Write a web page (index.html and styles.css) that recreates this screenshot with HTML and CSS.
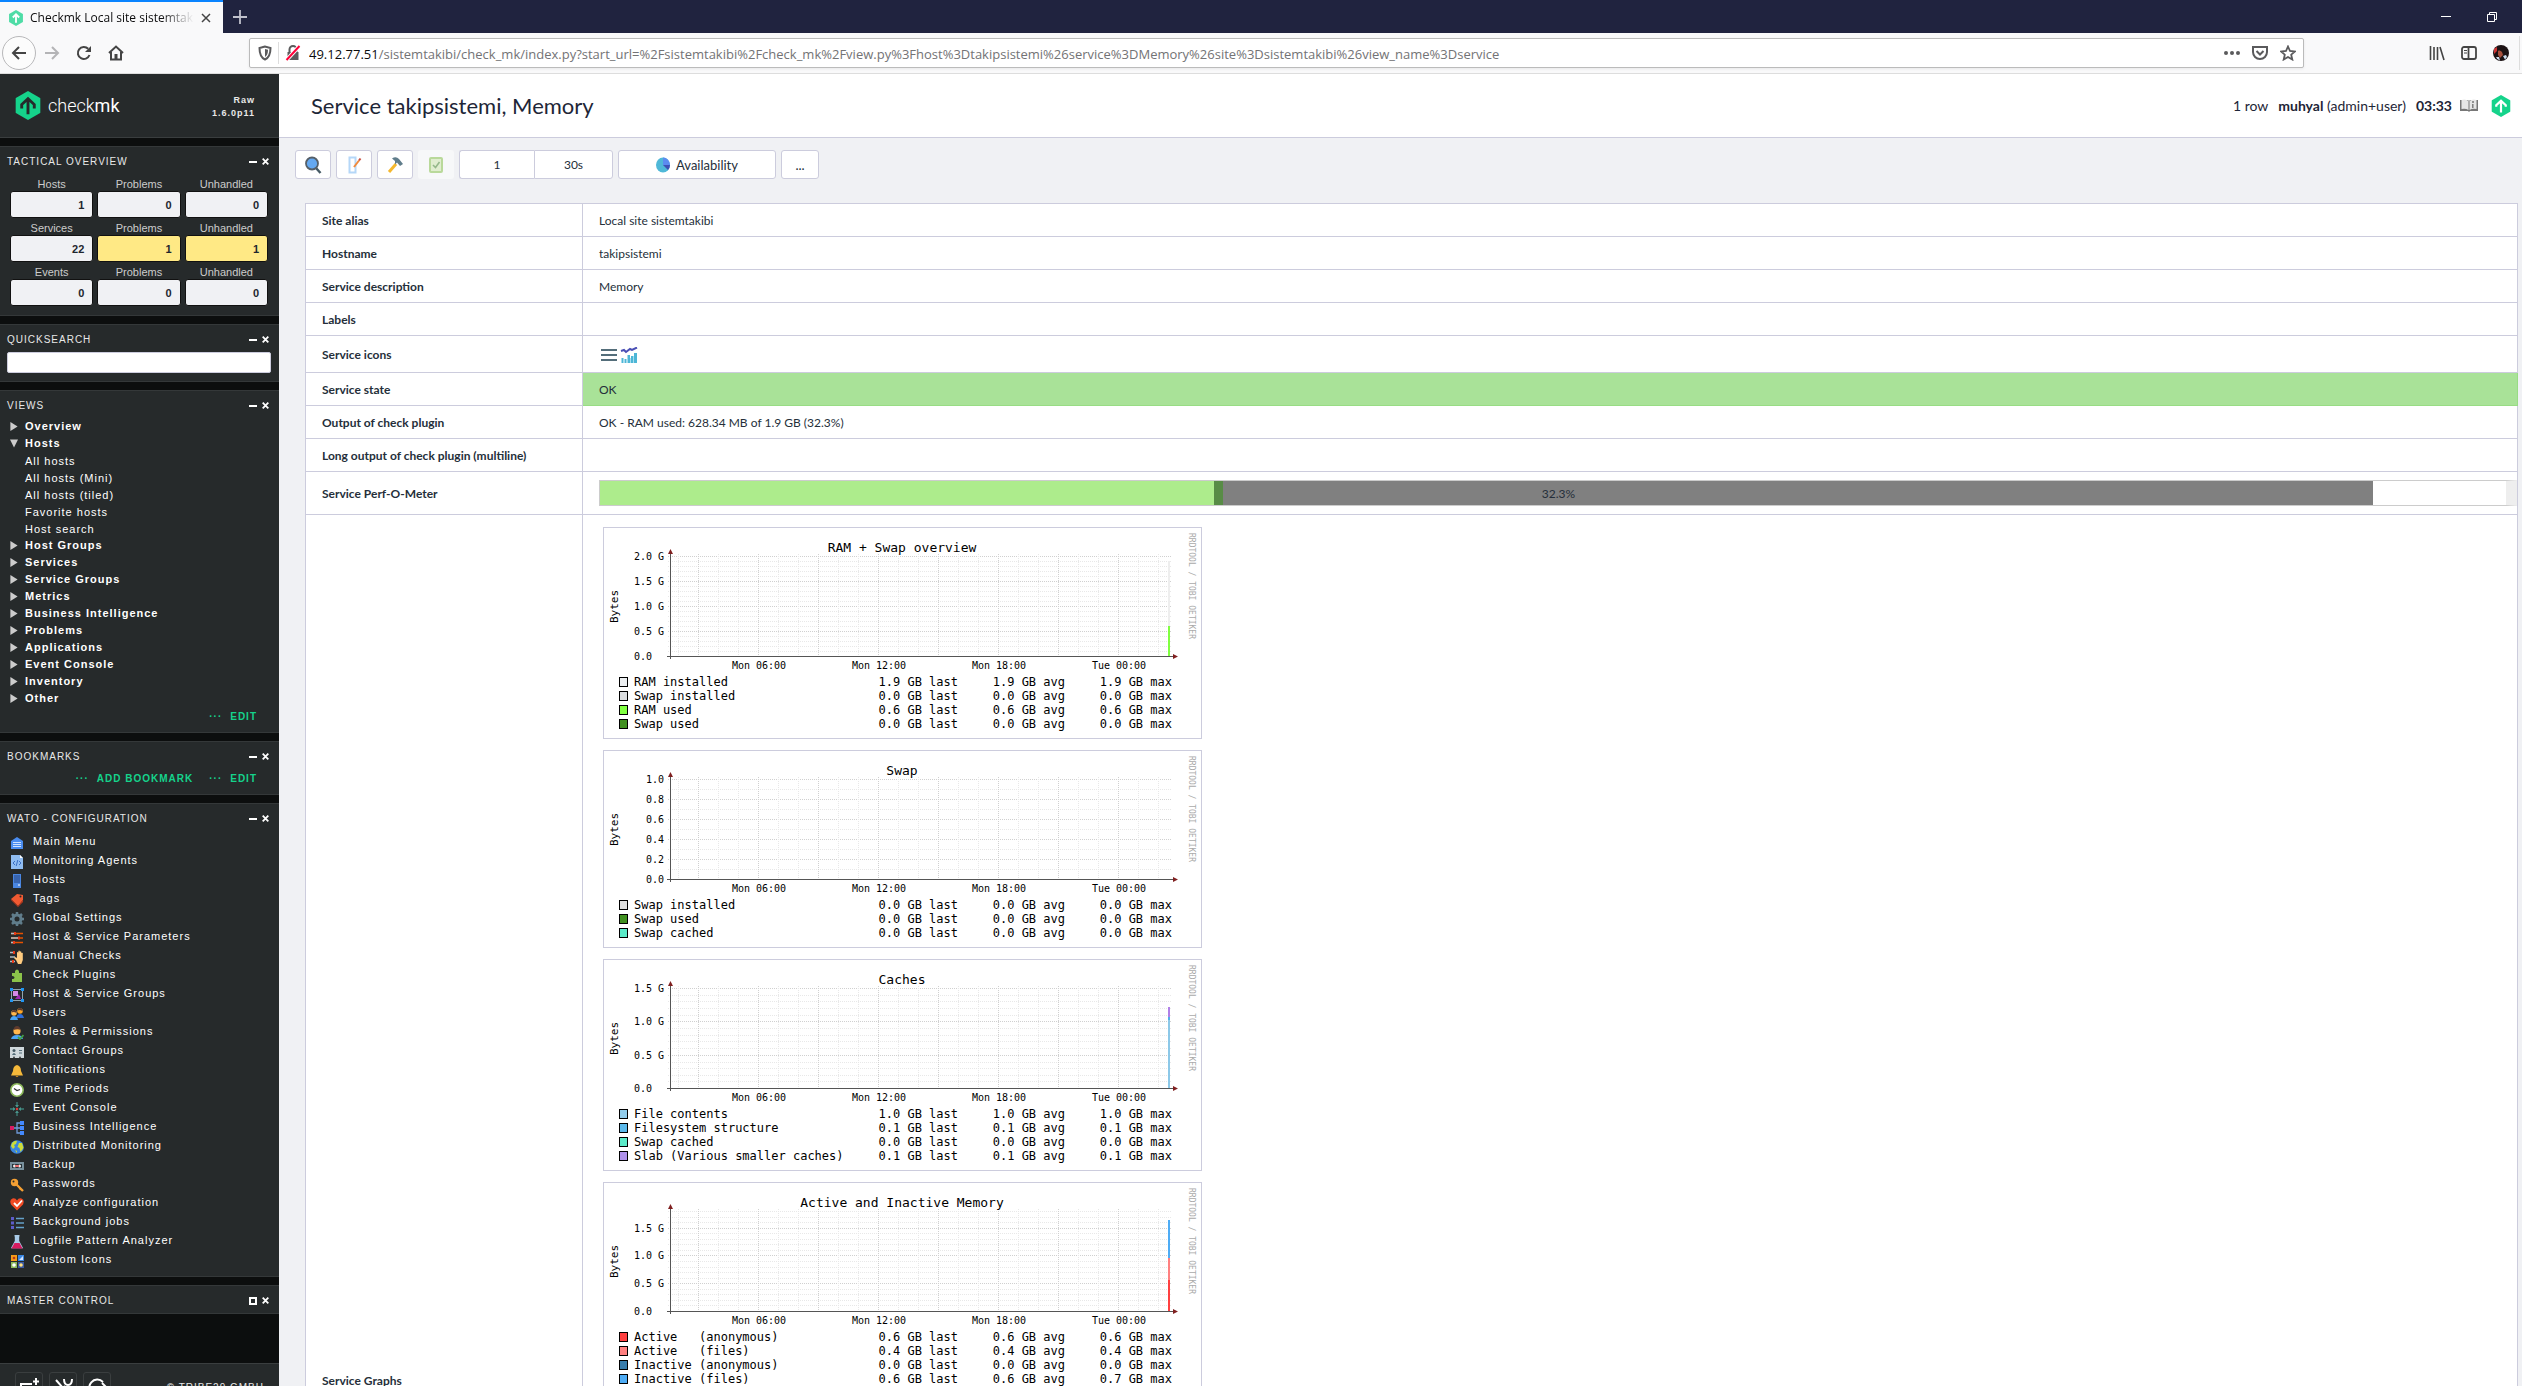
FILE: index.html
```html
<!DOCTYPE html>
<html lang="en">
<head>
<meta charset="utf-8">
<title>Checkmk Local site sistemtakibi</title>
<link rel="stylesheet" href="styles.css">
</head>
<body>
<svg class="defs" aria-hidden="true">
  <defs>
    <symbol id="logo" viewBox="0 0 26 30"><path fill="#15d38b" d="M13 0l13 7.500v15L13 30 0 22.500v-15z"/></symbol>
    <symbol id="minus" viewBox="0 0 8 8"><path d="M0 4h8" stroke="#fff" stroke-width="2"/></symbol>
    <symbol id="cross" viewBox="0 0 8 8"><path d="M1.500 1.500l5 5M6.500 1.500l-5 5" stroke="#fff" stroke-width="1.600"/></symbol>
    <symbol id="square" viewBox="0 0 8 8"><path d="M1 1h6v6H1z" fill="none" stroke="#fff" stroke-width="2"/></symbol>
    <symbol id="closed" viewBox="0 0 8 10"><path d="M0 0l8 5-8 5z" fill="#ccc"/></symbol>
    <symbol id="open" viewBox="0 0 8 8"><path d="M0 0h8L4 8z" fill="#ccc"/></symbol>
    <symbol id="axes" viewBox="0 0 597 147">
      <path class="grid-minor" d="M74.500 26v104M114.500 26v104M134.500 26v104M174.500 26v104M194.500 26v104M234.500 26v104M254.500 26v104M294.500 26v104M314.500 26v104M354.500 26v104M374.500 26v104M414.500 26v104M434.500 26v104M474.500 26v104M494.500 26v104M534.500 26v104M554.500 26v104"/>
      <path class="grid-major" d="M94.500 26v104M154.500 26v104M214.500 26v104M274.500 26v104M334.500 26v104M394.500 26v104M454.500 26v104M514.500 26v104"/>
      <path d="M66.500 24v107M63 128.500h507" stroke="#555" fill="none"/>
      <path d="M64 26l2.500-5 2.500 5zM569 126l5 2.500-5 2.500z" fill="#802020"/>
      <g class="tick" text-anchor="middle"><text x="155" y="141">Mon 06:00</text><text x="275" y="141">Mon 12:00</text><text x="395" y="141">Mon 18:00</text><text x="515" y="141">Tue 00:00</text></g>
      <text class="unit" transform="translate(14 95) rotate(-90)">Bytes</text>
      <text class="watermark" transform="translate(585 5) rotate(90)">RRDTOOL / TOBI OETIKER</text>
    </symbol>
  </defs>
</svg>

<header class="browser">
  <div class="tabs">
    <div class="tab">
      <svg class="favicon" viewBox="0 0 26 30"><use href="#logo" opacity=".75"/><path d="M13 24V9M7 14l6-6 6 6" fill="none" stroke="#fff" stroke-width="3.500"/></svg>
      <span class="tab-title">Checkmk Local site sistemtakibi</span>
      <button class="plain" aria-label="Close tab"><svg width="10" height="10" viewBox="0 0 10 10"><path d="M1 1l8 8M9 1L1 9" stroke="#444" stroke-width="1.500"/></svg></button>
    </div>
    <button class="plain new-tab" aria-label="New tab"><svg width="14" height="14" viewBox="0 0 14 14"><path d="M7 0v14M0 7h14" stroke="#c0c1cc" stroke-width="1.800"/></svg></button>
    <div class="window-buttons">
      <button class="plain" aria-label="Minimize"><svg width="10" height="10" viewBox="0 0 10 10"><path d="M0 4.500h10" stroke="#fff"/></svg></button>
      <button class="plain" aria-label="Restore"><svg width="10" height="10" viewBox="0 0 10 10" fill="none" stroke="#fff"><path d="M.5 2.500h7v7h-7zM2.500 2V.5h7v7H8"/></svg></button>
    </div>
  </div>
  <div class="navbar">
    <button class="plain back" aria-label="Back"><svg width="16" height="16" viewBox="0 0 16 16"><path d="M15 8H2M8 2L2 8l6 6" fill="none" stroke="#444" stroke-width="2"/></svg></button>
    <button class="plain" aria-label="Forward"><svg width="16" height="16" viewBox="0 0 16 16"><path d="M1 8h13M8 2l6 6-6 6" fill="none" stroke="#b4b4b6" stroke-width="2"/></svg></button>
    <button class="plain" aria-label="Reload"><svg width="16" height="16" viewBox="0 0 16 16"><path d="M13.500 10a6 6 0 1 1-1.300-6.200" fill="none" stroke="#444" stroke-width="2"/><path d="M15 1v6H9z" fill="#444"/></svg></button>
    <button class="plain" aria-label="Home"><svg width="16" height="16" viewBox="0 0 16 16" fill="none" stroke="#444" stroke-width="2"><path d="M1 8l7-6.500L15 8M3 7v7.500h10V7"/><path d="M8 14V9" stroke-width="3"/></svg></button>
    <div class="url">
      <svg width="16" height="16" viewBox="0 0 16 16"><path d="M8 1.500L2.500 3c0 6 1 9.500 5.500 11.500 4.500-2 5.500-5.500 5.500-11.500z" fill="none" stroke="#5a5a5c" stroke-width="2"/><path d="M8 4v8c2-1.500 3-3.500 3-7.200z" fill="#5a5a5c"/></svg>
      <span class="url-rule"></span>
      <svg width="16" height="16" viewBox="0 0 16 16"><path d="M4.500 7V4.500a3.500 3.500 0 0 1 7 0V7" fill="none" stroke="#5a5a5c" stroke-width="2"/><path d="M2.500 7h11v8h-11z" fill="#5a5a5c"/><path d="M1.500 15L14.500 1" stroke="#fff" stroke-width="4"/><path d="M1.500 15L14.500 1" stroke="#ff0039" stroke-width="2"/></svg>
      <span class="address"><b>49.12.77.51</b>/sistemtakibi/check_mk/index.py?start_url=%2Fsistemtakibi%2Fcheck_mk%2Fview.py%3Fhost%3Dtakipsistemi%26service%3DMemory%26site%3Dsistemtakibi%26view_name%3Dservice</span>
      <svg width="16" height="16" viewBox="0 0 16 16" fill="#5a5a5c"><circle cx="2" cy="8" r="2"/><circle cx="8" cy="8" r="2"/><circle cx="14" cy="8" r="2"/></svg>
      <svg width="16" height="16" viewBox="0 0 16 16" fill="none" stroke="#5a5a5c" stroke-width="2"><path d="M1 2h14v5a7 7 0 0 1-14 0z"/><path d="M4.500 6L8 9.500 11.500 6"/></svg>
      <svg width="16" height="16" viewBox="0 0 16 16" fill="none" stroke="#5a5a5c" stroke-width="1.800"><path d="M8 1.500l2 4.500 4.800.5-3.600 3.200 1.100 4.800L8 12l-4.300 2.500 1.100-4.800L1.200 6.500 6 6z"/></svg>
    </div>
    <div class="nav-right">
      <svg width="16" height="16" viewBox="0 0 16 16" stroke="#444" stroke-width="1.600"><path d="M1.500 1v14M5 2v13M8.500 2v13M11 2l4 13"/></svg>
      <svg width="16" height="16" viewBox="0 0 16 16" fill="none" stroke="#444" stroke-width="1.800"><rect x="1" y="2" width="14" height="12" rx="2"/><path d="M7.500 2v12"/><path d="M3 5.500h3M3 8h3" stroke-width="1"/></svg>
      <svg width="16" height="16" viewBox="0 0 16 16"><circle cx="8" cy="8" r="8" fill="#1c1214"/><path d="M5 6c1-1 3 0 4 1l1 3-3 3-2-3z" fill="#a8503c"/><path d="M3 12l3 0 1 3.500q-3-.5-4-3.500zM10 11l3-1 1 2-2 2.500z" fill="#cde"/><path d="M1 4l3-2v4L1 9z" fill="#c33"/></svg>
    </div>
  </div>
</header>

<div class="app">
  <aside class="sidebar">
    <div class="brand">
      <svg class="brand-mark" viewBox="0 0 26 30"><use href="#logo"/><path d="M13 24V10M6.500 18v-4L13 8l6.500 6v4" fill="none" stroke="#262a2b" stroke-width="3"/></svg>
      <span class="brand-name">check<b>mk</b></span>
      <span class="version">Raw<br>1.6.0p11</span>
    </div>
    <div class="snapins">
      <section class="snapin">
        <h2>Tactical Overview <span><svg><use href="#minus"/></svg><svg><use href="#cross"/></svg></span></h2>
        <table class="tactical">
          <tr><th>Hosts</th><th>Problems</th><th>Unhandled</th></tr>
          <tr><td><a href="#">1</a></td><td><a href="#">0</a></td><td><a href="#">0</a></td></tr>
          <tr><th>Services</th><th>Problems</th><th>Unhandled</th></tr>
          <tr><td><a href="#">22</a></td><td><a href="#" class="warn">1</a></td><td><a href="#" class="warn">1</a></td></tr>
          <tr><th>Events</th><th>Problems</th><th>Unhandled</th></tr>
          <tr><td><a href="#">0</a></td><td><a href="#">0</a></td><td><a href="#">0</a></td></tr>
        </table>
      </section>
      <section class="snapin">
        <h2>Quicksearch <span><svg><use href="#minus"/></svg><svg><use href="#cross"/></svg></span></h2>
        <input class="search" type="text" aria-label="Quicksearch">
      </section>
      <section class="snapin">
        <h2>Views <span><svg><use href="#minus"/></svg><svg><use href="#cross"/></svg></span></h2>
        <ul class="tree">
          <li class="folder"><svg><use href="#closed"/></svg>Overview</li>
          <li class="folder"><svg><use href="#open"/></svg>Hosts</li>
          <li><a href="#">All hosts</a></li>
          <li><a href="#">All hosts (Mini)</a></li>
          <li><a href="#">All hosts (tiled)</a></li>
          <li><a href="#">Favorite hosts</a></li>
          <li><a href="#">Host search</a></li>
          <li class="folder"><svg><use href="#closed"/></svg>Host Groups</li>
          <li class="folder"><svg><use href="#closed"/></svg>Services</li>
          <li class="folder"><svg><use href="#closed"/></svg>Service Groups</li>
          <li class="folder"><svg><use href="#closed"/></svg>Metrics</li>
          <li class="folder"><svg><use href="#closed"/></svg>Business Intelligence</li>
          <li class="folder"><svg><use href="#closed"/></svg>Problems</li>
          <li class="folder"><svg><use href="#closed"/></svg>Applications</li>
          <li class="folder"><svg><use href="#closed"/></svg>Event Console</li>
          <li class="folder"><svg><use href="#closed"/></svg>Inventory</li>
          <li class="folder"><svg><use href="#closed"/></svg>Other</li>
        </ul>
        <div class="foot-links"><a href="#">Edit</a></div>
      </section>
      <section class="snapin">
        <h2>Bookmarks <span><svg><use href="#minus"/></svg><svg><use href="#cross"/></svg></span></h2>
        <div class="foot-links"><a href="#">Add Bookmark</a><a href="#">Edit</a></div>
      </section>
      <section class="snapin">
        <h2>WATO - Configuration <span><svg><use href="#minus"/></svg><svg><use href="#cross"/></svg></span></h2>
        <ul class="menu">
          <li><svg viewBox="0 0 14 14"><path d="M1 5l6-4 6 4v8H1z" fill="#4a8df0"/><path d="M3 6.500h8M3 8.500h8M3 10.500h8" stroke="#cfe2ff"/></svg><a href="#">Main Menu</a></li>
          <li><svg viewBox="0 0 14 14"><path d="M1 0h9l3 3v11H1z" fill="#90bdf2"/><path d="M10 0v3h3z" fill="#fff"/><path d="M5 6L3 8l2 2M9 6l2 2-2 2M7.800 5l-1.600 6" stroke="#3b6fc4" fill="none"/></svg><a href="#">Monitoring Agents</a></li>
          <li><svg viewBox="0 0 14 14"><path d="M3 0h8v14H3z" fill="#4a86e0"/><path d="M4 2h6M4 4h6M4 6h6M4 8h6" stroke="#26437c"/><path d="M8 11h2" stroke="#fff"/></svg><a href="#">Hosts</a></li>
          <li><svg viewBox="0 0 14 14"><path d="M1 6l6-5 6 1v5l-5 6z" fill="#f05a32"/><path d="M8 13l5-6v2l-5 5-7-7V6z" fill="#b8381c"/><circle cx="10.500" cy="3.500" r="1" fill="#262a2b"/></svg><a href="#">Tags</a></li>
          <li><svg viewBox="0 0 14 14"><circle cx="7" cy="7" r="4" fill="none" stroke="#607d8b" stroke-width="3"/><path d="M7 0v3M7 11v3M0 7h3M11 7h3M2 2l2 2M10 10l2 2M12 2l-2 2M4 10l-2 2" stroke="#607d8b" stroke-width="2.500"/></svg><a href="#">Global Settings</a></li>
          <li><svg viewBox="0 0 14 14"><path d="M1 2.500h12M1 7h12M1 11.500h12" stroke="#e65100" stroke-width="1.500"/><path d="M1 2.500h4M1 7h8M1 11.500h3" stroke="#b0bec5" stroke-width="1.500"/><path d="M5 1v3M9 5.500v3M4 10v3" stroke="#e53b1a" stroke-width="2"/></svg><a href="#">Host &amp; Service Parameters</a></li>
          <li><svg viewBox="0 0 14 14"><path d="M0 2.500h5M0 7h5M0 11.500h5" stroke="#b0bec5" stroke-width="1.500"/><path d="M4 1v3M3 10v3" stroke="#e53b1a" stroke-width="2"/><path d="M6 10L4 8l1-1 2 1V2.500q.7-.8 1.400 0V1q.7-.8 1.400 0v.7q.8-.7 1.500 0v1.300q.8-.7 1.500 0V10l-1.500 4H8z" fill="#ffcc80"/></svg><a href="#">Manual Checks</a></li>
          <li><svg viewBox="0 0 14 14"><path d="M2 4h3q-.5-3 2-3.500Q9.500 1 9 4h3v9H2v-3q2.500.2 2.500-1.500T2 7z" fill="#8bc34a"/></svg><a href="#">Check Plugins</a></li>
          <li><svg viewBox="0 0 14 14"><path d="M1.500 1.500h11v11h-11z" fill="none" stroke="#90a4ae"/><path d="M0 0h3v3H0zM11 0h3v3h-3zM0 11h3v3H0zM11 11h3v3h-3z" fill="#2196f3"/><path d="M3 3h5v5H3z" fill="#d58be6"/><path d="M5 11l4-5 2 5z" fill="#9c27b0"/></svg><a href="#">Host &amp; Service Groups</a></li>
          <li><svg viewBox="0 0 14 14"><circle cx="10" cy="4" r="2.800" fill="#ffa726"/><path d="M7.500 3.500Q8 .5 10.500 1 13 1.500 12.500 4 10 2.500 7.500 3.500z" fill="#5d3a2e"/><path d="M6 11q1-4 4-4t4 4z" fill="#2f6ed8"/><circle cx="4" cy="6" r="2.800" fill="#ffb74d"/><path d="M1.500 5.500Q2 2.500 4.500 3 7 3.500 6.500 6 4 4.500 1.500 5.500z" fill="#5d3a2e"/><path d="M0 13q1-4 4-4t4 4z" fill="#4aa5f5"/></svg><a href="#">Users</a></li>
          <li><svg viewBox="0 0 14 14"><circle cx="7" cy="5" r="3.600" fill="#ffb74d"/><path d="M3.500 4Q4 0 7 0t3.500 4Q8 2.500 3.500 4z" fill="#5d3a2e"/><path d="M1 13q1-4 6-4t6 4z" fill="#4aa5f5"/><path d="M8 11l2 2 3.500-4" fill="none" stroke="#43a047" stroke-width="1.800"/></svg><a href="#">Roles &amp; Permissions</a></li>
          <li><svg viewBox="0 0 14 14"><path d="M0 2h14v11h-3l-1-2-1 2H5l-1-2-1 2H0z" fill="#cfd8dc"/><circle cx="4" cy="5.500" r="1.500" fill="#455a64"/><path d="M2 10q2-4 4 0zM9 5h3v1H9zM9 7.500h3v1H9z" fill="#546e7a"/></svg><a href="#">Contact Groups</a></li>
          <li><svg viewBox="0 0 14 14"><path d="M7 1q4 1 4 6l2 4.500H1L3 7q0-5 4-6z" fill="#f5b93a"/><path d="M5.500 12h3q-1.500 2-3 0z" fill="#e09b20"/></svg><a href="#">Notifications</a></li>
          <li><svg viewBox="0 0 14 14"><circle cx="7" cy="7" r="6.200" fill="#fff" stroke="#8bb85a" stroke-width="1.600"/><path d="M4 5.500l3 2 3-1" fill="none" stroke="#333" stroke-width="1.200"/></svg><a href="#">Time Periods</a></li>
          <li><svg viewBox="0 0 14 14"><path d="M7 0v5M7 9v5M0 7h5M9 7h5" stroke="#3d8078" stroke-width="1.300"/><path d="M5 3h4L7 5.500zM5 11h4L7 8.500zM3 5v4l2.500-2zM11 5v4L8.500 7z" fill="#4a958c"/><circle cx="7" cy="7" r="1.200" fill="#e53935"/></svg><a href="#">Event Console</a></li>
          <li><svg viewBox="0 0 14 14"><path d="M3 7h4M12 2H7v10h5M7 7h5" fill="none" stroke="#6f9ad8" stroke-width="1.300"/><path d="M0 5h4v4H0z" fill="#d81b60"/><path d="M10 0h4v4h-4zM10 5h4v4h-4zM10 10h4v4h-4z" fill="#448aff"/></svg><a href="#">Business Intelligence</a></li>
          <li><svg viewBox="0 0 14 14"><circle cx="7" cy="7" r="6.800" fill="#3a86e0"/><path d="M2 3q3-3 5-2l-1 3-2 1 1 2-2 2-2-3zM9 3l3 0 1.500 5-3 4-1-4-2-1zM5 10l2 1v2z" fill="#cddc39"/></svg><a href="#">Distributed Monitoring</a></li>
          <li><svg viewBox="0 0 14 14"><path d="M0 3h14v8H0z" fill="#78909c"/><path d="M2 5h10v4H2z" fill="#263238"/><circle cx="4.500" cy="7" r="1.500" fill="#eee"/><circle cx="9.500" cy="7" r="1.500" fill="#eee"/><path d="M5 6h4v2H5z" fill="#e57373"/></svg><a href="#">Backup</a></li>
          <li><svg viewBox="0 0 14 14"><circle cx="4.500" cy="4.500" r="3.700" fill="#f5a033"/><circle cx="3.500" cy="3.500" r="1" fill="#262a2b"/><path d="M6 6l7 7M9.500 11.500l1.500-1.500" stroke="#f5a033" stroke-width="2.400"/></svg><a href="#">Passwords</a></li>
          <li><svg viewBox="0 0 14 14"><path d="M7 13.500L1 7.500Q-1 3 2.500 1.500 5.500 .8 7 3.500 8.500.8 11.500 1.500 15 3 13 7.500z" fill="#f04a24"/><path d="M4 6l3 3 5-5.500" fill="none" stroke="#fff" stroke-width="1.800"/></svg><a href="#">Analyze configuration</a></li>
          <li><svg viewBox="0 0 14 14"><path d="M6 2.500h8M6 7h8M6 11.500h8" stroke="#64a0c8" stroke-width="1.500"/><path d="M1 1h3v3H1zM1 5.500h3v3H1zM1 10h3v3H1z" fill="#5c5cc8"/></svg><a href="#">Background jobs</a></li>
          <li><svg viewBox="0 0 14 14"><path d="M4.500.7h5M5.500 1v5L2 12.500h10L8.500 6V1" fill="#a9cbe8" stroke="#a9cbe8" stroke-width="1.400"/><path d="M4.500 8h5l3 5.500h-11z" fill="#d81b60"/></svg><a href="#">Logfile Pattern Analyzer</a></li>
          <li><svg viewBox="0 0 14 14"><path d="M1 1h6v6H1z" fill="#f59c1a"/><path d="M8 1h6v6H8z" fill="#3a86e0"/><path d="M1 8h6v6H1z" fill="#8bb85a"/><path d="M8 8h6v6H8z" fill="#3c5aa0"/><circle cx="4" cy="4" r="1.300" fill="#b8381c"/><path d="M9 6l4-4v4z" fill="#cfe2ff"/><circle cx="4" cy="11" r="1.800" fill="#fff"/><circle cx="11" cy="11" r="1.800" fill="#ffe082"/></svg><a href="#">Custom Icons</a></li>
        </ul>
      </section>
      <section class="snapin">
        <h2>Master Control <span><svg><use href="#square"/></svg><svg><use href="#cross"/></svg></span></h2>
      </section>
    </div>
    <footer class="side-foot">
      <button aria-label="Add element"><svg width="20" height="20" viewBox="0 0 20 20" fill="none" stroke="#fff" stroke-width="2"><path d="M13 6H2v11h15v-6M14 3.500h6M17 0v7"/></svg></button>
      <button aria-label="Tools"><svg width="20" height="20" viewBox="0 0 20 20" fill="none" stroke="#fff" stroke-width="2"><path d="M3 2l14 16M12 8l-9 10M11 1q0 6 4 6t4-6"/></svg></button>
      <button aria-label="Log out"><svg width="20" height="20" viewBox="0 0 20 20" fill="none" stroke="#fff" stroke-width="2"><path d="M16 4a8 8 0 1 0 1 10M7 9h12M15 5l4 4-4 4"/></svg></button>
      <a href="#">© tribe29 GmbH</a>
    </footer>
  </aside>

  <main>
    <div class="page-head">
      <h1>Service takipsistemi, Memory</h1>
      <span>1 row</span>
      <span class="user"><b>muhyal</b> (admin+user)</span>
      <b>03:33</b>
      <svg width="18" height="14" viewBox="0 0 18 14"><path d="M0 1h8l1 1 1-1h8v11h-8l-1 1-1-1H0z" fill="#777"/><path d="M1.500 1q4-1.500 7 1v9q-3-2-7-1zM16.500 1q-4-1.500-7 1v9q3-2 7-1z" fill="#e6e6e6"/><path d="M12 3h2M12.800 5v4" stroke="#777" stroke-width="1.400"/></svg>
      <svg class="head-mark" viewBox="0 0 26 30"><use href="#logo"/><path d="M13 24V10M6.500 16v-2L13 8l6.500 6v2" fill="none" stroke="#fff" stroke-width="3"/></svg>
    </div>

    <div class="toolbar">
      <button class="icon-button" aria-label="Filter"><svg width="18" height="18" viewBox="0 0 18 18"><path d="M12 12l4.500 5" stroke="#455a64" stroke-width="2.500"/><circle cx="8" cy="7.500" r="6" fill="#64a8f0" stroke="#555f68" stroke-width="1.800"/></svg></button>
      <button class="icon-button" aria-label="Edit view"><svg width="18" height="18" viewBox="0 0 18 18"><path d="M4.500 1.500h6v15h-6z" fill="#fff" stroke="#b5d7f8" stroke-width="2"/><path d="M9 11l5-6.500" stroke="#f08a3c" stroke-width="2"/><path d="M14 4.500l1.500-2" stroke="#c84b3c" stroke-width="2"/></svg></button>
      <button class="icon-button" aria-label="Commands"><svg width="18" height="18" viewBox="0 0 18 18"><path d="M3 16l7-8" stroke="#f5b82e" stroke-width="3"/><path d="M6 2.500q4-2.500 7 .5l4 5-3 2-3-3.500-2 2V5z" fill="#607d8b"/></svg></button>
      <button class="icon-button disabled" disabled aria-label="Checkboxes"><svg width="18" height="18" viewBox="0 0 18 18"><rect x="3" y="2" width="12" height="14" rx="1" fill="#e0edcf" stroke="#b9d99a" stroke-width="2"/><path d="M6 9l2.500 2.500L12.500 6" fill="none" stroke="#95b88a" stroke-width="1.600"/></svg></button>
      <div class="split"><button>1</button><button>30s</button></div>
      <button class="availability"><svg width="14" height="16" viewBox="0 0 14 16"><ellipse cx="7" cy="8" rx="7" ry="7.500" fill="#4fb8d8"/><path d="M7 8V.5A7 7.500 0 0 1 14 8z" fill="#5c8cf0"/><path d="M7 8h7a7 7.500 0 0 1-2 5z" fill="#3f51b5"/></svg>Availability</button>
      <button class="more">...</button>
    </div>

    <table class="details">
      <tr><th>Site alias</th><td>Local site sistemtakibi</td></tr>
      <tr><th>Hostname</th><td>takipsistemi</td></tr>
      <tr><th>Service description</th><td>Memory</td></tr>
      <tr><th>Labels</th><td></td></tr>
      <tr class="icons-row"><th>Service icons</th><td><div class="service-icons">
        <svg width="18" height="16" viewBox="0 0 18 16"><path d="M1 3h16M1 8h16M1 13h16" stroke="#546e7a" stroke-width="2"/></svg>
        <svg width="18" height="16" viewBox="0 0 18 16"><path d="M1.500 16v-5h2v5zM4.500 16v-4h2v4zM7.500 16V8h2.500v8zM11 16V9h2v7zM14 16V6h3v10z" fill="#4db6d6"/><path d="M4 16v-3M10.500 16v-5M13.500 16V9" stroke="#a5def0" fill="none"/><path d="M1 4l3-1 2 2 4-3 2 1 5-2.500" fill="none" stroke="#4a4fb5" stroke-width="2"/></svg>
      </div></td></tr>
      <tr><th>Service state</th><td class="state-ok">OK</td></tr>
      <tr><th>Output of check plugin</th><td>OK - RAM used: 628.34 MB of 1.9 GB (32.3%)</td></tr>
      <tr><th>Long output of check plugin (multiline)</th><td></td></tr>
      <tr class="perf-row"><th>Service Perf-O-Meter</th><td><div class="perf"><i class="used" style="width:32.2%"></i><i class="swap" style="width:.5%"></i><i class="rest" style="width:60.3%"></i><span>32.3%</span></div></td></tr>
      <tr class="graphs-row"><th>Service Graphs</th><td>
        <div class="graphs">
        <figure>
          <svg class="plot" viewBox="0 0 597 147">
            <path class="grid-minor" d="M64 33.500h504M64 38.500h504M64 43.500h504M64 48.500h504M64 58.500h504M64 63.500h504M64 68.500h504M64 73.500h504M64 83.500h504M64 88.500h504M64 93.500h504M64 98.500h504M64 108.500h504M64 113.500h504M64 118.500h504M64 123.500h504"/>
            <path class="grid-major" d="M64 28.500h504M64 53.500h504M64 78.500h504M64 103.500h504"/>
            <path d="M564 33h2v65h-2z" fill="#eee"/><path d="M564 98h2v30h-2z" fill="#80ff40"/>
            <use href="#axes"/>
            <text class="heading" x="298" y="24" text-anchor="middle">RAM + Swap overview</text>
            <g class="tick"><text x="30" y="32">2.0 G</text><text x="30" y="57">1.5 G</text><text x="30" y="82">1.0 G</text><text x="30" y="107">0.5 G</text><text x="30" y="132">0.0</text></g>
          </svg>
          <table class="legend">
            <tr><th><i style="background:#eceff1"></i>RAM installed</th><td>1.9 GB last</td><td>1.9 GB avg</td><td>1.9 GB max</td></tr>
            <tr><th><i style="background:#dcdee0"></i>Swap installed</th><td>0.0 GB last</td><td>0.0 GB avg</td><td>0.0 GB max</td></tr>
            <tr><th><i style="background:#80ff40"></i>RAM used</th><td>0.6 GB last</td><td>0.6 GB avg</td><td>0.6 GB max</td></tr>
            <tr><th><i style="background:#409020"></i>Swap used</th><td>0.0 GB last</td><td>0.0 GB avg</td><td>0.0 GB max</td></tr>
          </table>
        </figure>
        <figure>
          <svg class="plot" viewBox="0 0 597 147">
            <path class="grid-minor" d="M64 38.500h504M64 58.500h504M64 78.500h504M64 98.500h504M64 118.500h504"/>
            <path class="grid-major" d="M64 28.500h504M64 48.500h504M64 68.500h504M64 88.500h504M64 108.500h504"/>
            <use href="#axes"/>
            <text class="heading" x="298" y="24" text-anchor="middle">Swap</text>
            <g class="tick" text-anchor="end"><text x="60" y="32">1.0</text><text x="60" y="52">0.8</text><text x="60" y="72">0.6</text><text x="60" y="92">0.4</text><text x="60" y="112">0.2</text><text x="60" y="132">0.0</text></g>
          </svg>
          <table class="legend">
            <tr><th><i style="background:#e0e0e0"></i>Swap installed</th><td>0.0 GB last</td><td>0.0 GB avg</td><td>0.0 GB max</td></tr>
            <tr><th><i style="background:#409020"></i>Swap used</th><td>0.0 GB last</td><td>0.0 GB avg</td><td>0.0 GB max</td></tr>
            <tr><th><i style="background:#5bebc9"></i>Swap cached</th><td>0.0 GB last</td><td>0.0 GB avg</td><td>0.0 GB max</td></tr>
          </table>
        </figure>
        <figure>
          <svg class="plot" viewBox="0 0 597 147">
            <path class="grid-minor" d="M64 35.500h504M64 41.500h504M64 48.500h504M64 55.500h504M64 68.500h504M64 75.500h504M64 81.500h504M64 88.500h504M64 102.500h504M64 108.500h504M64 115.500h504M64 121.500h504"/>
            <path class="grid-major" d="M64 28.500h504M64 61.500h504M64 95.500h504"/>
            <path d="M564 47h2v10h-2z" fill="#b080e8"/><path d="M564 57h2v3h-2z" fill="#50b0e8"/><path d="M564 60h2v68h-2z" fill="#8cc8e8"/>
            <use href="#axes"/>
            <text class="heading" x="298" y="24" text-anchor="middle">Caches</text>
            <g class="tick"><text x="30" y="32">1.5 G</text><text x="30" y="65">1.0 G</text><text x="30" y="99">0.5 G</text><text x="30" y="132">0.0</text></g>
          </svg>
          <table class="legend">
            <tr><th><i style="background:#91cceb"></i>File contents</th><td>1.0 GB last</td><td>1.0 GB avg</td><td>1.0 GB max</td></tr>
            <tr><th><i style="background:#5bb9eb"></i>Filesystem structure</th><td>0.1 GB last</td><td>0.1 GB avg</td><td>0.1 GB max</td></tr>
            <tr><th><i style="background:#5bebc9"></i>Swap cached</th><td>0.0 GB last</td><td>0.0 GB avg</td><td>0.0 GB max</td></tr>
            <tr><th><i style="background:#af91eb"></i>Slab (Various smaller caches)</th><td>0.1 GB last</td><td>0.1 GB avg</td><td>0.1 GB max</td></tr>
          </table>
        </figure>
        <figure>
          <svg class="plot" viewBox="0 0 597 147">
            <path class="grid-minor" d="M64 28.500h504M64 34.500h504M64 39.500h504M64 50.500h504M64 56.500h504M64 61.500h504M64 67.500h504M64 78.500h504M64 84.500h504M64 89.500h504M64 95.500h504M64 106.500h504M64 111.500h504M64 117.500h504M64 122.500h504"/>
            <path class="grid-major" d="M64 45.500h504M64 72.500h504M64 100.500h504"/>
            <path d="M564 37h2v38h-2z" fill="#4eacf5"/><path d="M564 75h2v22h-2z" fill="#ff8080"/><path d="M564 97h2v31h-2z" fill="#ff4040"/>
            <use href="#axes"/>
            <text class="heading" x="298" y="24" text-anchor="middle">Active and Inactive Memory</text>
            <g class="tick"><text x="30" y="49">1.5 G</text><text x="30" y="76">1.0 G</text><text x="30" y="104">0.5 G</text><text x="30" y="132">0.0</text></g>
          </svg>
          <table class="legend">
            <tr><th><i style="background:#ff4040"></i>Active   (anonymous)</th><td>0.6 GB last</td><td>0.6 GB avg</td><td>0.6 GB max</td></tr>
            <tr><th><i style="background:#ff8080"></i>Active   (files)</th><td>0.4 GB last</td><td>0.4 GB avg</td><td>0.4 GB max</td></tr>
            <tr><th><i style="background:#377cab"></i>Inactive (anonymous)</th><td>0.0 GB last</td><td>0.0 GB avg</td><td>0.0 GB max</td></tr>
            <tr><th><i style="background:#4eacf5"></i>Inactive (files)</th><td>0.6 GB last</td><td>0.6 GB avg</td><td>0.7 GB max</td></tr>
          </table>
        </figure>
        </div>
      </td></tr>
    </table>
  </main>
</div>
</body>
</html>
```
FILE: styles.css
```css
* { box-sizing: border-box; }
body { margin: 0; height: 100vh; display: flex; flex-direction: column; overflow: hidden; font: 12px/16px Lato, sans-serif; color: #252f3a; background: #f0f1f4; }
.defs { display: none; }
h1, h2, ul, figure { margin: 0; padding: 0; }
ul { list-style: none; }
a { color: inherit; text-decoration: none; }
button { font: inherit; color: inherit; }
svg { flex: none; display: block; }
.plain { border: 0; background: none; padding: 0; display: flex; align-items: center; justify-content: center; }

/* Browser window */
.browser { flex: none; font-family: "Open Sans", sans-serif; }
.tabs { display: flex; align-items: center; height: 33px; background: #20233f; }
.tab { display: flex; align-items: center; gap: 7px; width: 223px; height: 33px; padding: 0 12px 0 9px; border-top: 2px solid #0a84ff; background: #f9f9fa; }
.favicon { width: 14px; height: 16px; }
.tab-title { flex: 1; overflow: hidden; white-space: nowrap; color: #0c0c0d; mask-image: linear-gradient(to right, #000 80%, transparent); }
.new-tab { width: 34px; height: 30px; }
.window-buttons { margin-left: auto; display: flex; gap: 36px; padding-right: 25px; }
.navbar { display: flex; align-items: center; height: 41px; padding: 0 2px; background: #f9f9fa; border-bottom: 1px solid #ddd; }
.navbar > .plain { width: 32px; height: 34px; }
.navbar > .back { width: 34px; border: 1px solid #b8b8ba; border-radius: 50%; background: #fcfcfc; }
.url { flex: 1; min-width: 0; display: flex; align-items: center; gap: 12px; height: 30px; margin-left: 117px; padding: 0 7px; background: #fff; border: 1px solid #bbb; border-radius: 2px; box-shadow: 0 1px 3px #0001; }
.url-rule { width: 1px; height: 22px; margin: 0 -6px 0 -7px; background: #ddd; }
.address { flex: 1; overflow: hidden; white-space: nowrap; font-size: 13px; line-height: 20px; margin-left: -4px; padding-top: 1px; color: #737375; }
.address b { font-weight: 400; color: #0c0c0d; }
.nav-right { display: flex; gap: 16px; margin-left: 125px; padding-right: 10px; border-right: 1px solid #ddd; height: 34px; align-items: center; }

/* Sidebar */
.app { flex: 1; min-height: 0; display: flex; }
.sidebar { flex: none; width: 279px; display: flex; flex-direction: column; background: #0c0e0e; color: #e8e8e8; font-family: "Liberation Sans", Arial, sans-serif; font-size: 11px; letter-spacing: 1px; }
.brand { flex: none; display: flex; align-items: center; height: 64px; padding: 0 24px 0 15px; gap: 7px; background: #262a2b; border-bottom: 1px solid #3a3e3f; }
.brand-mark { width: 26px; height: 29px; }
.brand-name { flex: 1; font: 300 18px/24px Roboto, sans-serif; letter-spacing: 0; color: #fff; }
.brand-name b { font-weight: 400; }
.version { padding-top: 2px; font-size: 9px; line-height: 13px; font-weight: 700; text-align: right; }
.snapins { flex: 1; min-height: 0; overflow: hidden; padding-top: 8px; display: flex; flex-direction: column; gap: 8px; }
.snapin { flex: none; background: #262a2b; border: solid #343839; border-width: 1px 0; }
.snapin h2 { display: flex; justify-content: space-between; height: 27px; line-height: 30px; padding: 0 9px 0 7px; font-size: 10px; font-weight: 400; text-transform: uppercase; }
.snapin h2 span { display: flex; align-items: center; gap: 4px; padding-top: 2px; }
.snapin h2 svg { width: 8px; height: 8px; }
.snapin h2 svg + svg { width: 9px; height: 9px; }
.tactical { width: 266px; margin: 2px 6px 7px; border-spacing: 4px 0; letter-spacing: 0; table-layout: fixed; border-collapse: separate; }
.tactical th { height: 15px; padding: 2px 0 0; font-size: 11px; line-height: 13px; font-weight: 400; color: #ccc; }
.tactical td { padding: 0 0 2px; }
.tactical a { display: block; height: 27px; padding-right: 8px; line-height: 27px; text-align: right; font-size: 11px; font-weight: 700; color: #1e262e; background: #f0f1f4; border: 1px solid #111; border-radius: 3px; }
.tactical a.warn { background: #ffe985; }
.search { display: block; width: 264px; height: 21px; margin: 0 7px 8px; border: 1px solid #ccd; border-radius: 2px; background: #fff; }
.tree li { height: 17px; line-height: 19px; padding-left: 25px; color: #fff; }
.tree .folder { display: flex; align-items: center; gap: 7px; padding-left: 10px; font-weight: 700; }
.tree svg { width: 8px; height: 9px; }
.foot-links { display: flex; justify-content: flex-end; gap: 16px; height: 25px; padding: 0 22px 7px 0; line-height: 20px; font-size: 10px; font-weight: 700; text-transform: uppercase; color: #15d38b; }
.foot-links a::before { content: "···"; margin-right: 8px; }
.menu { padding-bottom: 8px; }
.menu li { display: flex; align-items: center; gap: 9px; height: 19px; padding-left: 10px; color: #fff; }
.menu svg { width: 14px; height: 14px; margin-top: 4px; }
.side-foot { flex: none; display: flex; align-items: flex-start; gap: 6px; height: 23px; padding: 8px 15px 0; overflow: hidden; background: #262a2b; border-top: 1px solid #3a3e3f; }
.side-foot button { flex: none; width: 28px; height: 32px; padding: 0; display: flex; align-items: center; justify-content: center; background: none; border: 1px solid #3a3e3f; border-radius: 3px; }
.side-foot a { margin-left: auto; line-height: 32px; font-size: 10px; text-transform: uppercase; white-space: nowrap; }

/* Page */
main { flex: 1; min-width: 0; overflow: hidden; }
.page-head { display: flex; align-items: center; height: 64px; padding: 0 11px 0 32px; background: #fff; border-bottom: 1px solid #ccd; font-size: 14px; color: #1e2637; }
h1 { flex: 1; font-size: 22px; line-height: 28px; font-weight: 400; }
.user { margin: 0 10px; }
.page-head svg { margin-left: 8px; }
.page-head .head-mark { width: 20px; height: 22px; margin-left: 13px; }
.toolbar { display: flex; gap: 5px; padding: 12px 16px 24px; font-size: 12px; }
.toolbar button { display: flex; align-items: center; justify-content: center; height: 29px; padding: 0; background: #fff; border: 1px solid #ccd; border-radius: 3px; }
.toolbar .icon-button { width: 36px; }
.toolbar .disabled { background: #f7f8f9; border-color: transparent; }
.split { display: flex; }
.split button { width: 79px; border-radius: 0 3px 3px 0; }
.split button:first-child { width: 75px; border-right: 0; border-radius: 3px 0 0 3px; }
.toolbar .availability { width: 158px; gap: 6px; font-size: 13px; }
.toolbar .more { width: 38px; font-size: 13px; }
.details { width: calc(100% - 30px); margin: 0 4px 0 26px; border-collapse: collapse; background: #fff; }
.details > tbody > tr { height: 33px; }
.details > tbody > tr > th, .details > tbody > tr > td { border: 1px solid #ccd; padding: 2px 0 0 16px; text-align: left; vertical-align: middle; }
.details > tbody > tr > th { width: 277px; font-weight: 700; white-space: nowrap; }
.details > tbody > .icons-row { height: 37px; }
.details > tbody > .perf-row { height: 43px; }
.details > tbody > .graphs-row { height: 1730px; }
.details > tbody > tr > .state-ok { background: #a9e298; border-color: #98dc84; border-top-color: #ccd; border-left-color: #ccd; }
.service-icons { display: flex; gap: 2px; padding-left: 1px; }
.perf { position: relative; display: flex; height: 26px; border: 1px solid #ccc; border-right: 11px solid #eee; margin-bottom: 2px; }
.perf .used { background: #adec8c; }
.perf .swap { background: #588c46; }
.perf .rest { background: #808080; }
.perf span { position: absolute; inset: 0 -11px 0 0; text-align: center; line-height: 25px; }
.details > tbody > .graphs-row > td { vertical-align: top; padding: 12px 0 0 20px; }

/* Graphs */
.graphs { display: flex; flex-direction: column; align-items: flex-start; gap: 11px; font: 12px/14px "DejaVu Sans Mono", monospace; color: #000; }
figure { width: 599px; padding-bottom: 7px; border: 1px solid #ccd; background: #fff; }
.plot { width: 100%; height: 147px; }
.plot text, #axes text { font-family: "DejaVu Sans Mono", monospace; }
.grid-minor { stroke: #e8e8e8; stroke-dasharray: 1 1; fill: none; }
.grid-major { stroke: #d0d0d0; stroke-dasharray: 1 1; fill: none; }
.heading { font-size: 13px; }
.tick { font-size: 10px; }
.unit { font-size: 11px; }
.watermark { font-size: 8px; fill: #aaa; }
.legend { width: 553px; margin-left: 15px; border-spacing: 0; table-layout: fixed; white-space: pre; }
.legend th { width: 231px; height: 14px; padding: 0; font-weight: 400; text-align: left; }
.legend td { padding: 0; text-align: right; width: 107px; }
.legend td:nth-child(2) { width: 108px; }
.legend i { display: inline-block; width: 9px; height: 10px; margin-right: 6px; border: 1px solid #000; vertical-align: -1px; }
```
